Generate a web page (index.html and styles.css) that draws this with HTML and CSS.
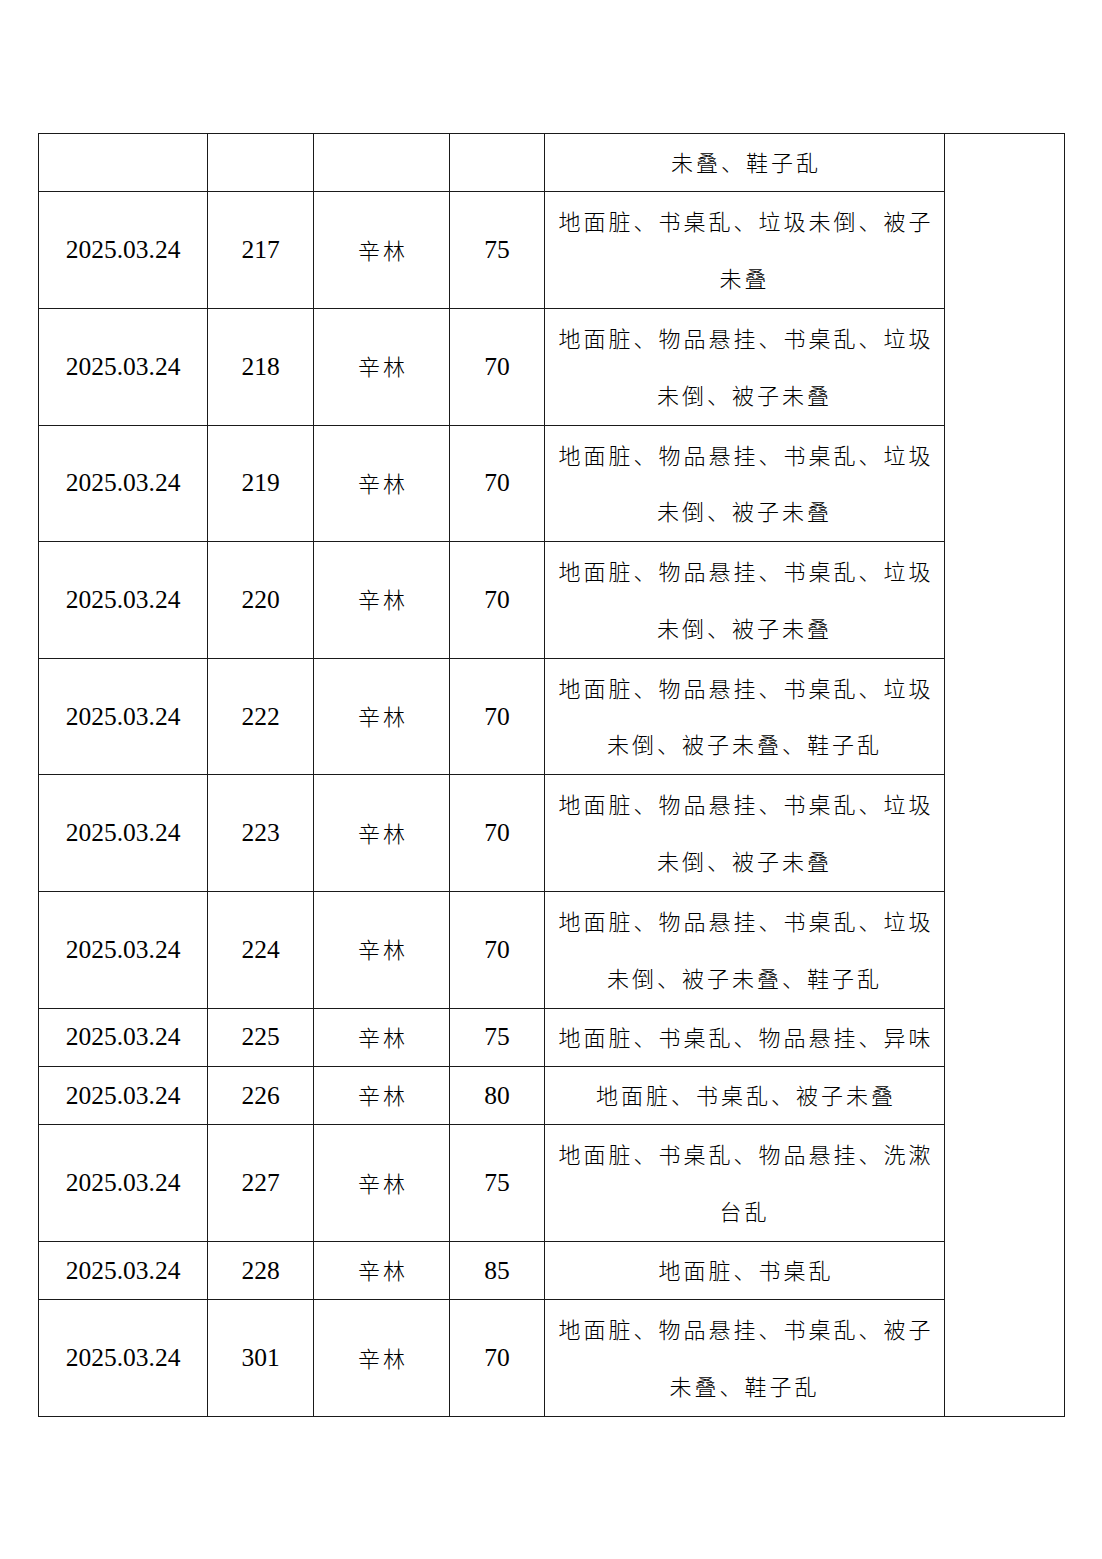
FILE: index.html
```html
<!DOCTYPE html>
<html lang="zh-CN">
<head>
<meta charset="utf-8">
<title>检查记录</title>
<link rel="stylesheet" href="styles.css">
</head>
<body>
<div class="page">
<table class="grid">
<colgroup>
<col class="c-date"><col class="c-room"><col class="c-name"><col class="c-score"><col class="c-issue"><col class="c-note">
</colgroup>
<tbody>
<tr class="one"><td class="num"></td><td class="num"></td><td class="cjk"></td><td class="num"></td><td class="cjk">未叠、鞋子乱</td><td class="note" rowspan="13"></td></tr>
<tr class="two"><td class="num">2025.03.24</td><td class="num">217</td><td class="cjk">辛林</td><td class="num">75</td><td class="cjk">地面脏、书桌乱、垃圾未倒、被子未叠</td></tr>
<tr class="two"><td class="num">2025.03.24</td><td class="num">218</td><td class="cjk">辛林</td><td class="num">70</td><td class="cjk">地面脏、物品悬挂、书桌乱、垃圾未倒、被子未叠</td></tr>
<tr class="two"><td class="num">2025.03.24</td><td class="num">219</td><td class="cjk">辛林</td><td class="num">70</td><td class="cjk">地面脏、物品悬挂、书桌乱、垃圾未倒、被子未叠</td></tr>
<tr class="two"><td class="num">2025.03.24</td><td class="num">220</td><td class="cjk">辛林</td><td class="num">70</td><td class="cjk">地面脏、物品悬挂、书桌乱、垃圾未倒、被子未叠</td></tr>
<tr class="two"><td class="num">2025.03.24</td><td class="num">222</td><td class="cjk">辛林</td><td class="num">70</td><td class="cjk">地面脏、物品悬挂、书桌乱、垃圾未倒、被子未叠、鞋子乱</td></tr>
<tr class="two"><td class="num">2025.03.24</td><td class="num">223</td><td class="cjk">辛林</td><td class="num">70</td><td class="cjk">地面脏、物品悬挂、书桌乱、垃圾未倒、被子未叠</td></tr>
<tr class="two"><td class="num">2025.03.24</td><td class="num">224</td><td class="cjk">辛林</td><td class="num">70</td><td class="cjk">地面脏、物品悬挂、书桌乱、垃圾未倒、被子未叠、鞋子乱</td></tr>
<tr class="one"><td class="num">2025.03.24</td><td class="num">225</td><td class="cjk">辛林</td><td class="num">75</td><td class="cjk">地面脏、书桌乱、物品悬挂、异味</td></tr>
<tr class="one"><td class="num">2025.03.24</td><td class="num">226</td><td class="cjk">辛林</td><td class="num">80</td><td class="cjk">地面脏、书桌乱、被子未叠</td></tr>
<tr class="two"><td class="num">2025.03.24</td><td class="num">227</td><td class="cjk">辛林</td><td class="num">75</td><td class="cjk">地面脏、书桌乱、物品悬挂、洗漱台乱</td></tr>
<tr class="one"><td class="num">2025.03.24</td><td class="num">228</td><td class="cjk">辛林</td><td class="num">85</td><td class="cjk">地面脏、书桌乱</td></tr>
<tr class="two"><td class="num">2025.03.24</td><td class="num">301</td><td class="cjk">辛林</td><td class="num">70</td><td class="cjk">地面脏、物品悬挂、书桌乱、被子未叠、鞋子乱</td></tr>
</tbody>
</table>
</div>
</body>
</html>
```
FILE: styles.css
```css
html, body {
  margin: 0;
  padding: 0;
  background: #ffffff;
}
.page {
  padding: 133px 0 0 38px;
}
.grid {
  border-collapse: collapse;
  table-layout: fixed;
  width: 1026px;
}
.c-date { width: 169px; }
.c-room { width: 106px; }
.c-name { width: 136px; }
.c-score { width: 95px; }
.c-issue { width: 400px; }
.c-note { width: 120px; }
.grid td {
  border: 1px solid #1a1a1a;
  padding: 0 8px;
  text-align: center;
  vertical-align: middle;
  color: #000;
  line-height: 56px;
}
.one { height: 58.4px; }
.two { height: 116.6px; }
.num {
  font-family: "Liberation Serif", "Times New Roman", serif;
  font-size: 25.5px;
}
.cjk {
  font-family: "Noto Sans CJK SC", sans-serif;
  font-weight: 300;
  font-size: 22px;
  letter-spacing: 3px;
  text-indent: 3px;
}
.two .cjk {
  line-height: 56.5px;
  padding-bottom: 2.5px;
}
.one .cjk {
  line-height: 54.5px;
  padding-bottom: 2.5px;
}
.note {
  padding: 0;
}
```
